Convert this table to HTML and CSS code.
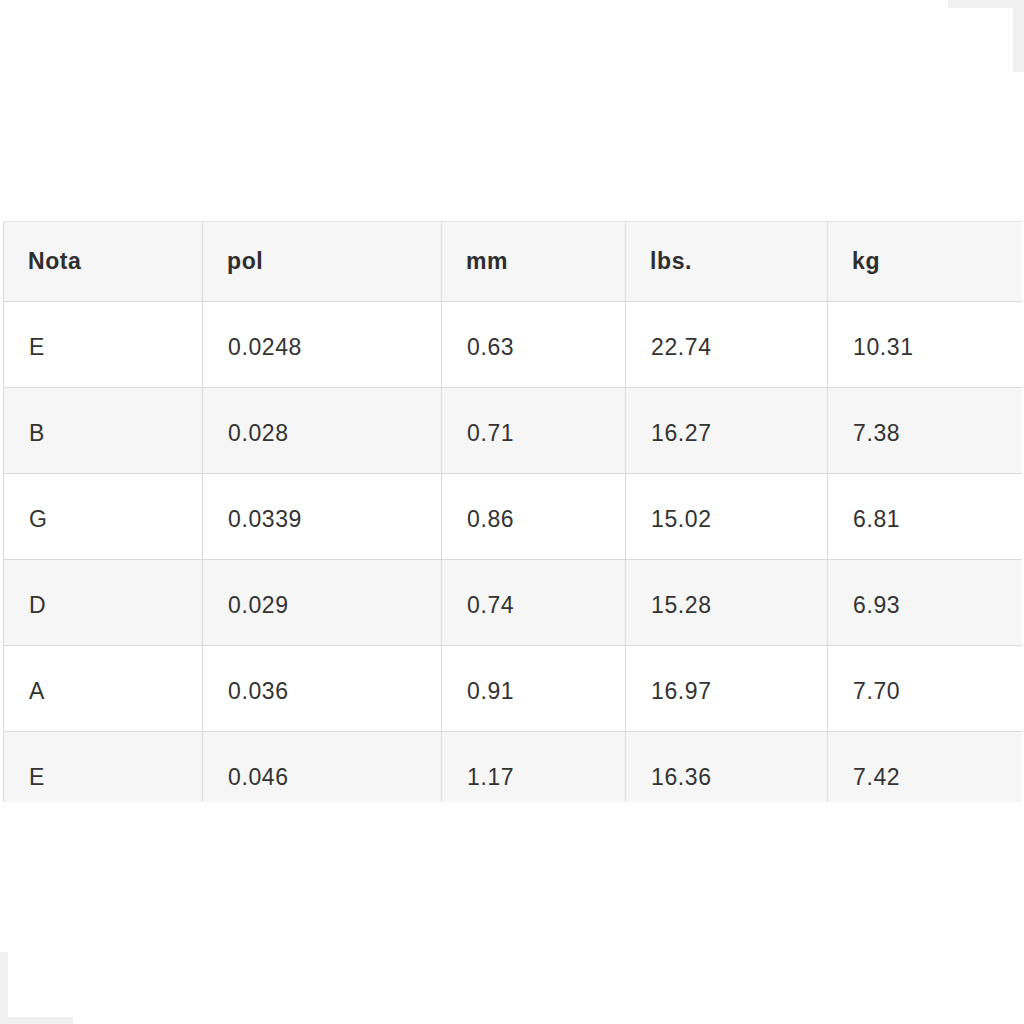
FILE: index.html
```html
<!DOCTYPE html>
<html>
<head>
<meta charset="utf-8">
<link rel="stylesheet" href="styles.css">
</head>
<body>
<div class="corner corner-tr"></div>
<div class="page">
  <div class="table-wrap">
    <table class="strings">
      <colgroup>
        <col class="c1"><col class="c2"><col class="c3"><col class="c4"><col class="c5">
      </colgroup>
      <thead>
        <tr><th>Nota</th><th>pol</th><th>mm</th><th>lbs.</th><th>kg</th></tr>
      </thead>
      <tbody>
        <tr><td>E</td><td>0.0248</td><td>0.63</td><td>22.74</td><td>10.31</td></tr>
        <tr><td>B</td><td>0.028</td><td>0.71</td><td>16.27</td><td>7.38</td></tr>
        <tr><td>G</td><td>0.0339</td><td>0.86</td><td>15.02</td><td>6.81</td></tr>
        <tr><td>D</td><td>0.029</td><td>0.74</td><td>15.28</td><td>6.93</td></tr>
        <tr><td>A</td><td>0.036</td><td>0.91</td><td>16.97</td><td>7.70</td></tr>
        <tr><td>E</td><td>0.046</td><td>1.17</td><td>16.36</td><td>7.42</td></tr>
      </tbody>
    </table>
  </div>
</div>
<div class="corner corner-bl"></div>
</body>
</html>
```
FILE: styles.css
```css
html, body {
  margin: 0;
  padding: 0;
  background: #ffffff;
}
body {
  width: 1024px;
  height: 1024px;
  position: relative;
  overflow: hidden;
  font-family: "Liberation Sans", Arial, sans-serif;
  color: #333333;
}
.page {
  padding: 221px 2px 0 3px;
}
.table-wrap {
  height: 581px;
  overflow: hidden;
}
.strings {
  width: 1020px;
  border-collapse: collapse;
  table-layout: fixed;
  font-size: 23px;
}
.c1 { width: 199px; }
.c2 { width: 239px; }
.c3 { width: 184px; }
.c4 { width: 202px; }
.c5 { width: 196px; }
.strings th,
.strings td {
  border: 1px solid #dadada;
  text-align: left;
  padding: 0 0 0 25px;
  letter-spacing: 0.6px;
}
.strings th {
  height: 79px;
  font-weight: bold;
  background: #f6f6f6;
  color: #2e2e2e;
  padding-left: 24px;
}
.strings td {
  height: 86px;
  font-weight: normal;
  line-height: 26px;
  padding-top: 4px;
  box-sizing: border-box;
}
.strings tbody tr:nth-child(even) td {
  background: #f6f6f6;
}
.strings thead tr th {
  border-top: 1px solid #e6e6e6;
}
.corner {
  position: absolute;
  width: 76px;
  height: 72px;
  border-color: #f0f0f0;
  border-style: solid;
  border-width: 0;
}
.corner-tr {
  top: 0;
  right: 0;
  border-top-width: 8px;
  border-right-width: 11px;
  box-sizing: border-box;
}
.corner-bl {
  bottom: 0;
  left: 0;
  width: 73px;
  border-left-width: 8px;
  border-bottom-width: 7px;
  box-sizing: border-box;
}
```
